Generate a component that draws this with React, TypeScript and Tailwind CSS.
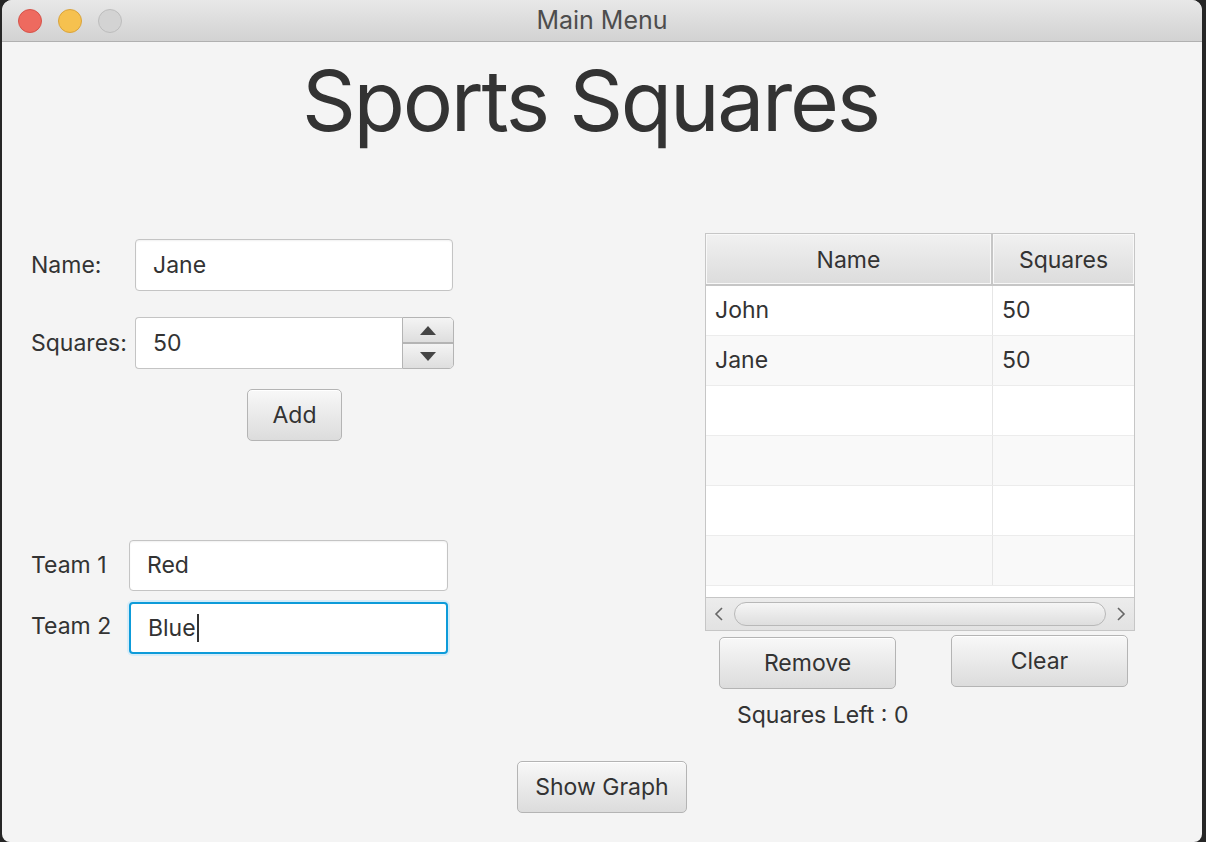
import React from 'react';

const font = { fontFamily: 'Inter, "Noto Sans", sans-serif' };

function Button({ label, className = '' }: { label: string; className?: string }) {
  return (
    <div
      className={`flex items-center justify-center rounded-[5px] border border-[#b4b4b4] bg-gradient-to-b from-[#f8f8f8] to-[#dcdcdc] text-[23px] text-[#333] shadow-[inset_0_1px_0_#ffffff] ${className}`}
    >
      {label}
    </div>
  );
}

function TextBox({ value, className = '', focused = false }: { value: string; className?: string; focused?: boolean }) {
  return (
    <div
      className={`flex items-center rounded-[4px] bg-white pl-[17px] text-[23px] text-[#333] ${
        focused
          ? 'border-2 border-[#0d9bd9] shadow-[0_0_0_2px_#d6ecf8]'
          : 'border border-[#c4c4c4] shadow-[inset_0_1px_2px_rgba(0,0,0,0.06)]'
      } ${className}`}
    >
      {value}
      {focused && <span className="ml-[1px] h-[28px] w-[2px] bg-[#333]" />}
    </div>
  );
}

function Triangle({ up }: { up?: boolean }) {
  return (
    <svg width="16" height="9" viewBox="0 0 16 9">
      <path d={up ? 'M8 0 L16 9 L0 9 Z' : 'M0 0 L16 0 L8 9 Z'} fill="#454545" />
    </svg>
  );
}

const rows: [string, string][] = [
  ['John', '50'],
  ['Jane', '50'],
  ['', ''],
  ['', ''],
  ['', ''],
  ['', ''],
];

export default function App() {
  return (
    <div className="h-[842px] w-[1206px] overflow-hidden bg-[#262626] pl-[2px] pr-[4px]" style={font}>
      <div className="flex h-full flex-col overflow-hidden rounded-t-[10px] rounded-b-[8px] bg-[#f4f4f4]">
        {/* title bar */}
        <div className="relative flex h-[42px] shrink-0 items-center border-b border-[#b0b0b0] bg-gradient-to-b from-[#e8e8e8] to-[#d2d2d2]">
          <div className="flex items-center gap-[16px] pl-[16px]">
            <span className="h-[24px] w-[24px] rounded-full border border-[#d5534a] bg-[#ee6a5f]" />
            <span className="h-[24px] w-[24px] rounded-full border border-[#d9a33c] bg-[#f6c14f]" />
            <span className="h-[24px] w-[24px] rounded-full border border-[#bcbcbc] bg-[#d3d3d3]" />
          </div>
          <div className="absolute inset-x-0 top-0 flex h-[41px] items-center justify-center text-[25px] text-[#4d4d4d]">
            Main Menu
          </div>
        </div>

        {/* heading */}
        <div className="pl-[300px] pt-[17px]">
          <h1 className="text-[84px] leading-none tracking-[-2.3px] text-[#333]">Sports Squares</h1>
        </div>

        <div className="mt-[90px] flex items-start">
          {/* left form */}
          <div className="w-[703px] shrink-0 pl-[29px] pt-[6px]">
            <div className="flex items-center">
              <span className="w-[104px] text-[23px] text-[#333]">Name:</span>
              <TextBox value="Jane" className="h-[52px] w-[318px]" />
            </div>
            <div className="mt-[26px] flex items-center">
              <span className="w-[104px] text-[23px] text-[#333]">Squares:</span>
              <div className="flex h-[52px] w-[319px]">
                <div className="flex flex-1 items-center rounded-l-[4px] border border-r-0 border-[#c4c4c4] bg-white pl-[17px] text-[23px] text-[#333]">
                  50
                </div>
                <div className="flex w-[52px] flex-col overflow-hidden rounded-r-[5px] border border-[#b4b4b4]">
                  <div className="flex flex-1 items-center justify-center border-b-2 border-[#b4b4b4] bg-gradient-to-b from-[#f4f4f4] to-[#dedede]">
                    <Triangle up />
                  </div>
                  <div className="flex flex-1 items-center justify-center bg-gradient-to-b from-[#f4f4f4] to-[#dedede]">
                    <Triangle />
                  </div>
                </div>
              </div>
            </div>
            <Button label="Add" className="ml-[216px] mt-[20px] h-[52px] w-[95px]" />

            <div className="mt-[99px] flex items-center">
              <span className="w-[98px] text-[23px] text-[#333]">Team 1</span>
              <TextBox value="Red" className="h-[51px] w-[319px]" />
            </div>
            <div className="mt-[11px] flex items-center">
              <span className="-mt-[4px] w-[98px] text-[23px] text-[#333]">Team 2</span>
              <TextBox value="Blue" focused className="h-[52px] w-[319px]" />
            </div>
          </div>

          {/* table side */}
          <div className="w-[430px] shrink-0">
            <div className="flex h-[398px] flex-col border border-[#c6c6c6] bg-white">
              <div className="flex h-[52px] shrink-0 border-b-2 border-[#c6c6c6] text-[23px] text-[#333]">
                <div className="flex w-[287px] items-center justify-center border-r-2 border-[#c6c6c6] bg-gradient-to-b from-[#f1f1f1] to-[#dcdcdc] pt-[2px] shadow-[inset_0_0_0_1px_#f8f8f8]">
                  Name
                </div>
                <div className="flex flex-1 items-center justify-center bg-gradient-to-b from-[#f1f1f1] to-[#dcdcdc] pt-[2px] shadow-[inset_0_0_0_1px_#f8f8f8]">
                  Squares
                </div>
              </div>
              <div className="flex-1 overflow-hidden">
                {rows.map(([n, s], i) => (
                  <div
                    key={i}
                    className={`flex h-[50px] border-b border-[#ececec] text-[23px] text-[#333] ${
                      i % 2 === 1 ? 'bg-[#f9f9f9]' : 'bg-white'
                    }`}
                  >
                    <div className="flex w-[287px] items-center border-r border-[#e6e6e6] pl-[9px]">{n}</div>
                    <div className="flex flex-1 items-center pl-[9px]">{s}</div>
                  </div>
                ))}
              </div>
              <div className="flex h-[33px] shrink-0 items-center gap-[8px] border-t border-[#c6c6c6] bg-gradient-to-b from-[#ececec] to-[#e2e2e2] px-[6px]">
                <svg width="14" height="16" viewBox="0 0 14 16">
                  <path d="M10 2 L4 8 L10 14" stroke="#666" strokeWidth="1.6" fill="none" />
                </svg>
                <div className="h-[24px] flex-1 rounded-full border border-[#b8b8b8] bg-gradient-to-b from-[#f6f6f6] to-[#dedede]" />
                <svg width="14" height="16" viewBox="0 0 14 16">
                  <path d="M4 2 L10 8 L4 14" stroke="#666" strokeWidth="1.6" fill="none" />
                </svg>
              </div>
            </div>
            <div className="flex items-start">
              <Button label="Remove" className="ml-[14px] mt-[6px] h-[52px] w-[177px]" />
              <Button label="Clear" className="ml-[55px] mt-[4px] h-[52px] w-[177px]" />
            </div>
            <div className="ml-[32px] mt-[12px] h-[28px] text-[23px] leading-[28px] text-[#333]">Squares Left : 0</div>
          </div>
        </div>

        <div className="mt-[32px] pl-[515px]">
          <Button label="Show Graph" className="h-[52px] w-[170px]" />
        </div>
      </div>
    </div>
  );
}
